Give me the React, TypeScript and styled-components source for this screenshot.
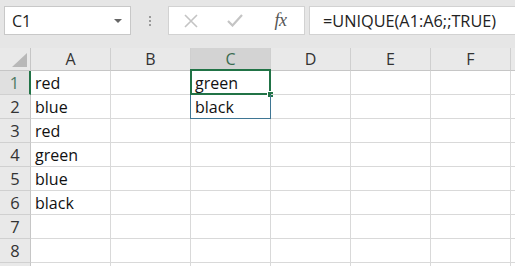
import React from "react";
import styled, { createGlobalStyle } from "styled-components";

const Global = createGlobalStyle`
  html, body { margin: 0; padding: 0; background: #ffffff; }
  body { width: 515px; height: 266px; overflow: hidden; font-family: "Open Sans", "Liberation Sans", sans-serif; }
`;

const Page = styled.div`
  width: 515px;
  height: 266px;
  overflow: hidden;
  background: #e6e6e6;
  display: flex;
  flex-direction: column;
`;

const Toolbar = styled.div`
  height: 48px;
  flex: none;
  display: flex;
  align-items: flex-start;
  padding-top: 6px;
  box-sizing: border-box;
`;

const NameBox = styled.div`
  margin-left: 4px;
  width: 127px;
  height: 29px;
  box-sizing: border-box;
  background: #fff;
  border: 1px solid #c8c8c8;
  display: flex;
  align-items: center;
  justify-content: space-between;
  padding: 0 8px 0 7px;
  font-size: 16px;
  color: #222;
`;

const DropArrow = styled.span`
  width: 0;
  height: 0;
  border-left: 4px solid transparent;
  border-right: 4px solid transparent;
  border-top: 4px solid #666;
`;

const Grip = styled.div`
  width: 37px;
  height: 29px;
  display: flex;
  flex-direction: column;
  align-items: center;
  justify-content: center;
  gap: 2px;
`;

const GripDot = styled.span`
  width: 2px;
  height: 2px;
  background: #9a9a9a;
`;

const ButtonBox = styled.div`
  width: 137px;
  height: 29px;
  box-sizing: border-box;
  background: #fff;
  border: 1px solid #d2d2d2;
  display: flex;
  align-items: center;
`;

const IconSlot = styled.div<{ $w: number }>`
  width: ${(p) => p.$w}px;
  height: 100%;
  display: flex;
  align-items: center;
  justify-content: center;
`;

const Fx = styled.span`
  font-family: "Liberation Serif", "DejaVu Serif", serif;
  font-style: italic;
  font-size: 18px;
  color: #555;
  letter-spacing: -0.5px;
`;

const FormulaInput = styled.div`
  margin-left: 4px;
  flex: 1;
  height: 29px;
  box-sizing: border-box;
  background: #fff;
  border: 1px solid #d2d2d2;
  border-right: none;
  display: flex;
  align-items: center;
  padding-left: 13px;
  font-size: 16.3px;
  color: #222;
  white-space: nowrap;
`;

const Sheet = styled.div`
  display: grid;
  grid-template-columns: 31px repeat(7, 80px);
  grid-auto-rows: 24px;
  grid-template-rows: 23px;
  background: #fff;
  flex: none;
`;

const Corner = styled.div`
  background: #e9e9e9;
  border-right: 1px solid #c6c6c6;
  border-bottom: 1px solid #c6c6c6;
  box-sizing: border-box;
  display: flex;
  align-items: flex-end;
  justify-content: flex-end;
  padding: 0 3px 3px 0;
`;

const Triangle = styled.span`
  width: 0;
  height: 0;
  border-left: 15px solid transparent;
  border-bottom: 14px solid #b8b8b8;
`;

const ColHeader = styled.div<{ $sel?: boolean }>`
  background: ${(p) => (p.$sel ? "#d3d3d3" : "#e9e9e9")};
  border-right: 1px solid #cfcfcf;
  border-bottom: 1px solid ${(p) => (p.$sel ? "#217346" : "#c6c6c6")};
  box-sizing: border-box;
  display: flex;
  align-items: center;
  justify-content: center;
  font-size: 16px;
  color: ${(p) => (p.$sel ? "#3a6b50" : "#333")};
`;

const RowHeader = styled.div<{ $sel?: boolean }>`
  background: ${(p) => (p.$sel ? "#e0e0e0" : "#e9e9e9")};
  border-right: ${(p) => (p.$sel ? "2px solid #217346" : "1px solid #c6c6c6")};
  border-bottom: 1px solid #d0d0d0;
  box-sizing: border-box;
  display: flex;
  align-items: center;
  justify-content: center;
  font-size: 16.5px;
  color: ${(p) => (p.$sel ? "#4d7a63" : "#333")};
`;

const Cell = styled.div`
  position: relative;
  border-right: 1px solid #d9d9d9;
  border-bottom: 1px solid #d9d9d9;
  box-sizing: border-box;
  display: flex;
  align-items: center;
  padding-left: 4px;
  padding-top: 1px;
  font-size: 16px;
  color: #111;
  white-space: nowrap;
`;

const ActiveFrame = styled.div`
  position: absolute;
  left: -1px;
  top: -2px;
  right: -1px;
  bottom: -1px;
  border: 2px solid #217346;
  pointer-events: none;
`;

const FillHandle = styled.span`
  position: absolute;
  right: -5px;
  bottom: -5px;
  width: 7px;
  height: 7px;
  background: #217346;
  border: 1px solid #fff;
  box-sizing: border-box;
`;

const SpillFrame = styled.div`
  position: absolute;
  left: -1px;
  top: 0px;
  right: -1px;
  bottom: -1px;
  border: 1px solid #3f7694;
  border-top: none;
  pointer-events: none;
`;

const cols = ["A", "B", "C", "D", "E", "F", ""];
const colA = ["red", "blue", "red", "green", "blue", "black", "", "", ""];
const colC = ["green", "black"];

export default function App() {
  return (
    <>
      <Global />
      <Page>
        <Toolbar>
          <NameBox>
            <span>C1</span>
            <DropArrow />
          </NameBox>
          <Grip>
            <GripDot />
            <GripDot />
            <GripDot />
          </Grip>
          <ButtonBox>
            <IconSlot $w={44}>
              <svg width="14" height="14" viewBox="0 0 14 14">
                <path d="M1 1 L13 13 M13 1 L1 13" stroke="#c4c4c4" strokeWidth="1.6" fill="none" />
              </svg>
            </IconSlot>
            <IconSlot $w={44}>
              <svg width="16" height="13" viewBox="0 0 16 13">
                <path d="M1 7 L5.5 11.5 L15 1" stroke="#c4c4c4" strokeWidth="2.2" fill="none" />
              </svg>
            </IconSlot>
            <IconSlot $w={47}>
              <Fx>fx</Fx>
            </IconSlot>
          </ButtonBox>
          <FormulaInput>=UNIQUE(A1:A6;;TRUE)</FormulaInput>
        </Toolbar>
        <Sheet>
          <Corner>
            <Triangle />
          </Corner>
          {cols.map((c, i) => (
            <ColHeader key={i} $sel={c === "C"}>
              {c}
            </ColHeader>
          ))}
          {colA.map((v, i) => (
            <React.Fragment key={i}>
              <RowHeader $sel={i === 0}>{i < 8 ? i + 1 : ""}</RowHeader>
              <Cell>{v}</Cell>
              <Cell />
              <Cell>
                {colC[i] ?? ""}
                {i === 0 && (
                  <ActiveFrame>
                    <FillHandle />
                  </ActiveFrame>
                )}
                {i === 1 && <SpillFrame />}
              </Cell>
              <Cell />
              <Cell />
              <Cell />
              <Cell />
            </React.Fragment>
          ))}
        </Sheet>
      </Page>
    </>
  );
}
